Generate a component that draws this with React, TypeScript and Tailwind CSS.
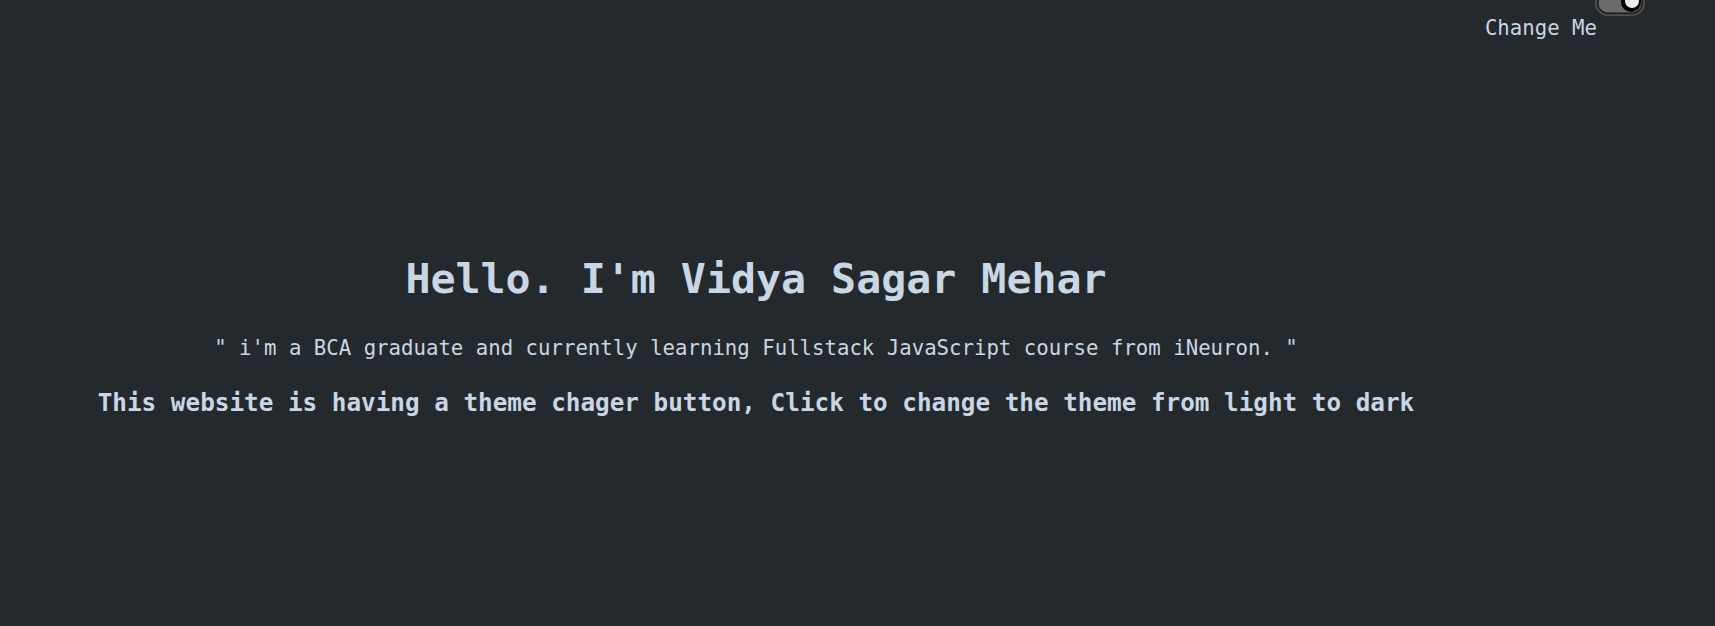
import React, { useState } from "react";

function Toggle({ on, onClick }: { on: boolean; onClick: () => void }) {
  return (
    <button
      onClick={onClick}
      className="-mt-[10px] -ml-[2px] block h-[26px] w-[50px] cursor-pointer"
      aria-label="theme toggle"
    >
      <svg width="50" height="26" viewBox="0 0 50 26">
        <rect x="1" y="1" width="48" height="24" rx="12" fill="#1a1a1a" stroke="#4d4d4d" strokeWidth="2" />
        <rect x="3.5" y="3.5" width="43" height="19" rx="9.5" fill="#6b6b6b" />
        <circle cx={on ? 36 : 14} cy="12" r="10" fill="#000" />
        <circle cx={on ? 37 : 13} cy="11" r="7" fill="#ececec" />
      </svg>
    </button>
  );
}

export default function App() {
  const [dark, setDark] = useState(true);

  return (
    <div
      className={
        "min-h-screen font-['DejaVu_Sans_Mono',monospace] " +
        (dark ? "bg-[#24292e] text-[#c9d6e3]" : "bg-white text-[#24292e]")
      }
    >
      <header className="flex justify-end pr-[70px]">
        <div className="flex items-start">
          <span className="mt-[16px] text-[20.7px] leading-[24px]">Change Me</span>
          <Toggle on={dark} onClick={() => setDark(!dark)} />
        </div>
      </header>

      <main className="flex w-[1512px] flex-col items-center text-center">
        <h1 className="mt-[215px] text-[41.6px] font-bold leading-[48px]">
          Hello. I'm Vidya Sagar Mehar
        </h1>
        <p className="mt-[33px] text-[20.7px] leading-[24px]">
          " i'm a BCA graduate and currently learning Fullstack JavaScript course from iNeuron. "
        </p>
        <h3 className="mt-[29px] text-[24.3px] font-bold leading-[28px]">
          This website is having a theme chager button, Click to change the theme from light to dark
        </h3>
      </main>
    </div>
  );
}
